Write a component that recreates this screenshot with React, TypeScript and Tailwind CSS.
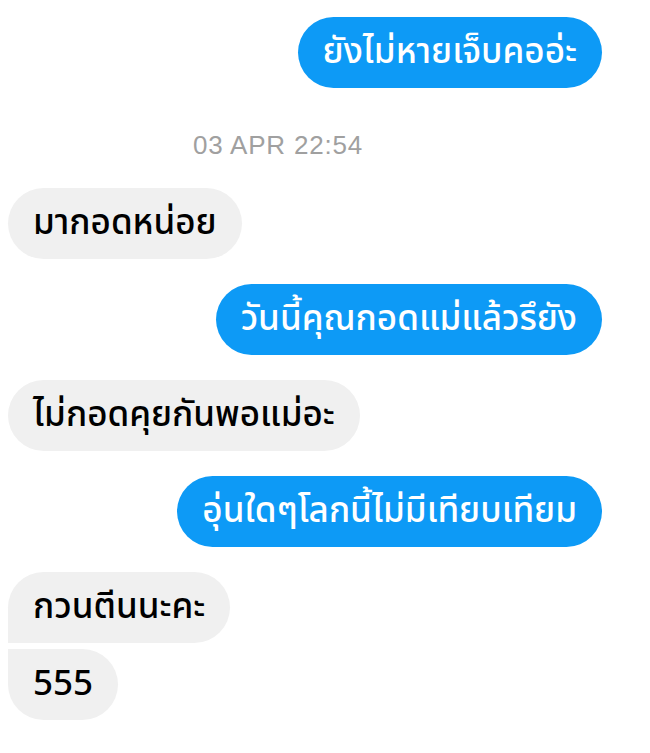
const font = { fontFamily: '"Noto Sans Thai", "Noto Sans", "DejaVu Sans", sans-serif' }

type Msg = { text: string; mine: boolean; shape?: string }

function Bubble({ text, mine, shape }: Msg) {
  const base = 'h-[71px] flex items-center px-[25px] text-[35px] font-medium leading-none'
  const colors = mine ? 'bg-[#0d9af6] text-white' : 'bg-[#f0f0f0] text-black'
  return (
    <div className={mine ? 'flex justify-end pr-[48px]' : 'flex justify-start pl-[8px]'}>
      <div className={`${base} ${colors} ${shape ?? 'rounded-full'}`}>{text}</div>
    </div>
  )
}

export default function App() {
  return (
    <div className="w-[650px] h-[753px] bg-white overflow-hidden pt-[17px]" style={font}>
      <Bubble text="ยังไม่หายเจ็บคออ่ะ" mine />

      <div className="h-[100px] flex items-center justify-center pr-[94px] pt-[14px]">
        <span className="text-[26px] text-[#a0a0a0] tracking-[0.8px]" style={{ fontFamily: '"Liberation Sans", Arial, sans-serif' }}>
          03 APR 22:54
        </span>
      </div>

      <div className="flex flex-col gap-[25px]">
        <Bubble text="มากอดหน่อย" mine={false} />
        <Bubble text="วันนี้คุณกอดแม่แล้วรึยัง" mine />
        <Bubble text="ไม่กอดคุยกันพอแม่อะ" mine={false} />
        <Bubble text="อุ่นใดๆโลกนี้ไม่มีเทียบเทียม" mine />
        <div className="flex flex-col gap-[6px]">
          <Bubble text="กวนตีนนะคะ" mine={false} shape="rounded-l-full rounded-r-full rounded-bl-[8px]" />
          <Bubble text="555" mine={false} shape="rounded-r-full rounded-bl-full rounded-tl-[8px]" />
        </div>
      </div>
    </div>
  )
}
